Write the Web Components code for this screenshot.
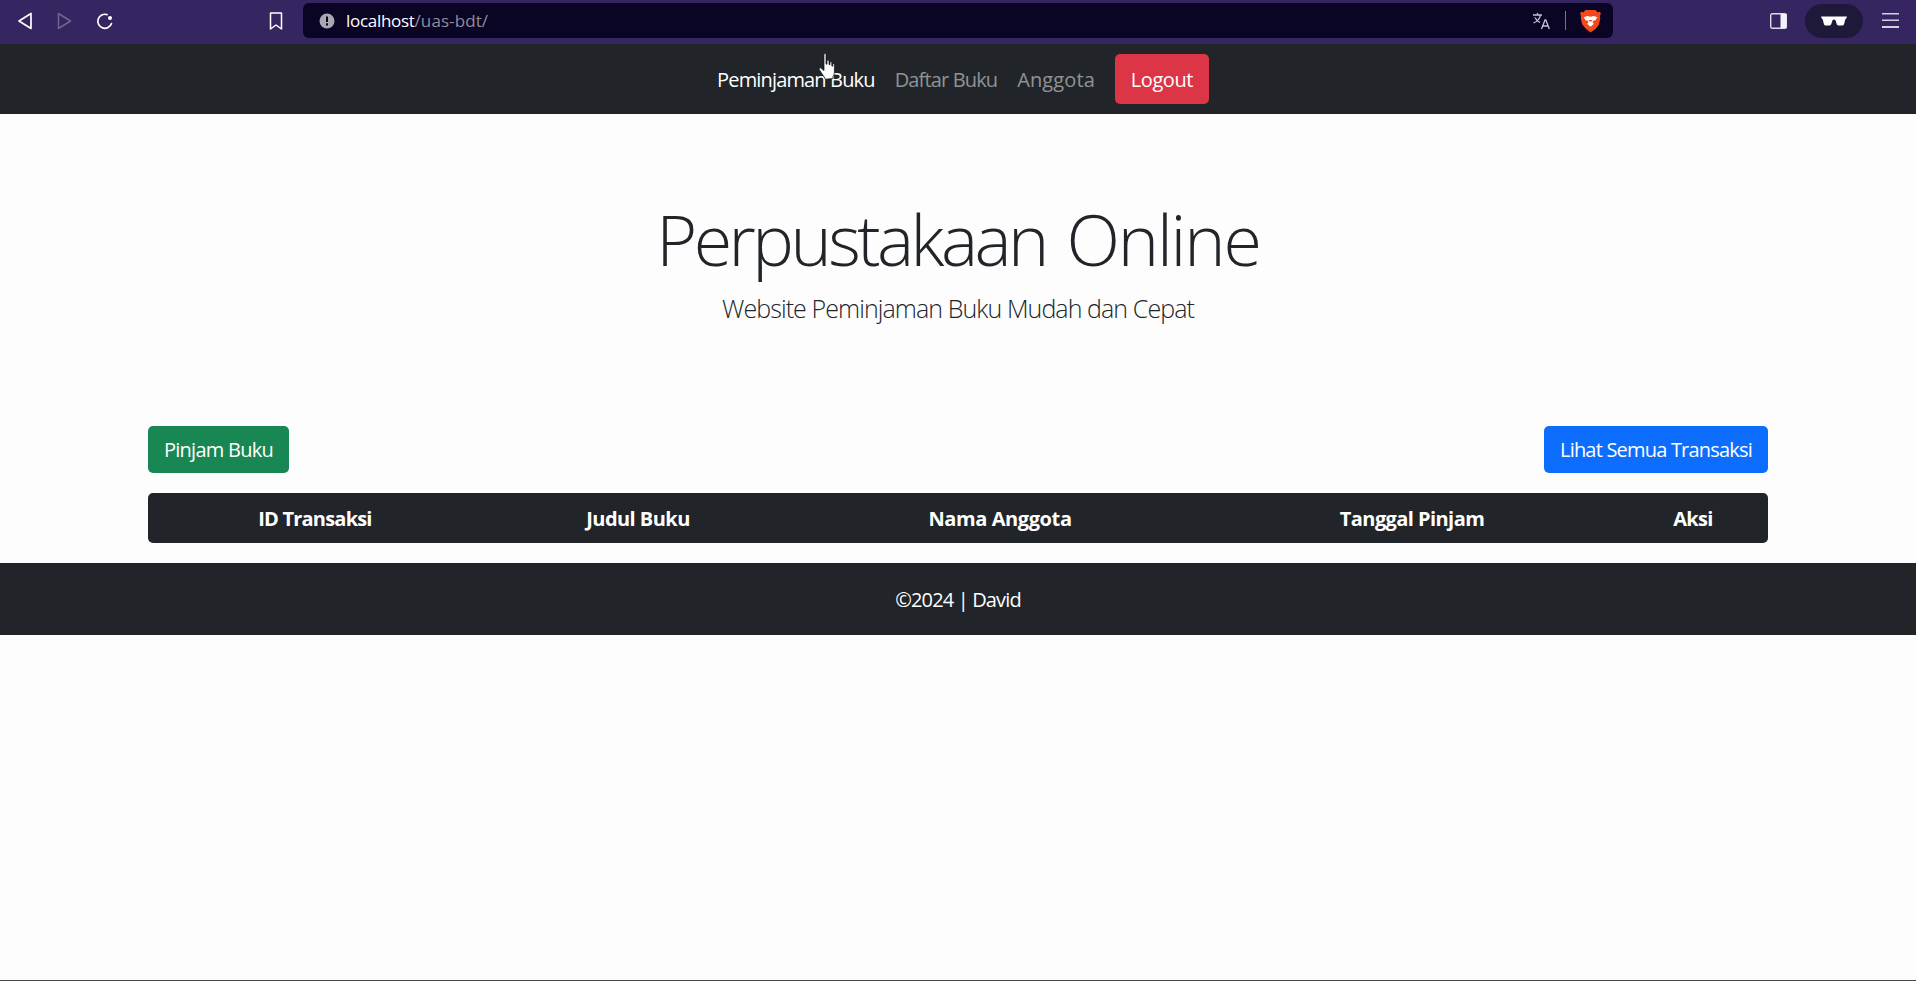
<!DOCTYPE html>
<html lang="id"><head><meta charset="utf-8"><title>Perpustakaan Online</title>
<style>
html,body{margin:0;padding:0;background:#fdfdfd}
body{font-family:"Open Sans","Noto Sans","Liberation Sans",sans-serif}
</style></head><body>
<app-page>
  <browser-bar></browser-bar>
  <site-nav>
    <nav-link active>Peminjaman Buku</nav-link>
    <nav-link>Daftar Buku</nav-link>
    <nav-link style="letter-spacing:.1px">Anggota</nav-link>
    <action-btn slot="end" kind="danger" tall style="letter-spacing:-.45px">Logout</action-btn>
  </site-nav>
  <hero-banner>
    <span slot="title"><span style="letter-spacing:-3.55px">Perpustakaan</span> <span style="letter-spacing:-2.15px">Online</span></span>
    <span slot="lead">Website Peminjaman Buku Mudah dan Cepat</span>
  </hero-banner>
  <main-panel>
    <action-btn slot="left" kind="success" style="letter-spacing:-.75px">Pinjam Buku</action-btn>
    <action-btn slot="right" kind="primary" style="letter-spacing:-.8px">Lihat Semua Transaksi</action-btn>
    <table-head>
      <span style="letter-spacing:-.8px">ID Transaksi</span><span style="letter-spacing:-.55px">Judul Buku</span><span style="letter-spacing:-.4px">Nama Anggota</span><span style="letter-spacing:-.57px">Tanggal Pinjam</span><span>Aksi</span>
    </table-head>
  </main-panel>
  <site-footer>©2024 | David</site-footer>
  <hand-cursor></hand-cursor>
</app-page>
<script>
const FONT='"Open Sans","Noto Sans","Liberation Sans",sans-serif';
function def(name,html){
  customElements.define(name,class extends HTMLElement{
    constructor(){super();this.attachShadow({mode:'open'}).innerHTML=html;}
  });
}
def('app-page',`<style>
:host{display:flex;flex-direction:column;height:981px;box-sizing:border-box;position:relative;overflow:hidden;background:#fdfdfd;border-bottom:1px solid #46464e;font-family:${FONT};color:#212529}
</style><slot></slot>`);

def('browser-bar',`<style>
:host{display:flex;align-items:center;height:44px;box-sizing:border-box;padding-bottom:3px;background:#352560;color:#fff;flex:none}
svg{display:block;flex:none}
.url{margin-left:21px;width:1310px;height:35px;background:#0a0425;border-radius:6px;display:flex;align-items:center;box-sizing:border-box;padding:0 12px 0 16px}
.addr{margin-left:11px;font:17px/35px "Open Sans",sans-serif;letter-spacing:-.3px;color:#fff;flex:1;white-space:nowrap}
.addr i{font-style:normal;color:#8f8e9c;letter-spacing:.1px}
.sep{width:1px;height:19px;background:#77758a;margin:0 14px 0 14px}
</style>
<svg style="margin-left:17px" width="17" height="18" viewBox="0 0 17 18" fill="none" stroke="#fff" stroke-width="1.7" stroke-linejoin="round"><path d="M14 1.5v15L2 9z"/></svg>
<svg style="margin-left:23px" width="15" height="18" viewBox="0 0 15 18" fill="none" stroke="#6f6690" stroke-width="1.5" stroke-linejoin="round"><path d="M1.5 1.5v15L13.5 9z"/></svg>
<svg style="margin-left:24px" width="18" height="18" viewBox="0 0 18 18" fill="none" stroke="#fff" stroke-width="1.7" stroke-linecap="round"><path d="M15.5 11.5A7 7 0 1 1 11 2.6"/><circle cx="14" cy="6" r="2" fill="#fff" stroke="none"/></svg>
<svg style="margin-left:155px" width="14" height="18" viewBox="0 0 14 18" fill="none" stroke="#fff" stroke-width="1.5" stroke-linejoin="round"><path d="M1.5 1h11v16L7 13l-5.500 4z"/></svg>
<div class="url" style="margin-left:20px">
  <svg width="16" height="16" viewBox="0 0 16 16"><circle cx="8" cy="8" r="7.500" fill="#a9a8b2"/><rect x="7" y="3.500" width="2" height="5.500" fill="#0a0425"/><rect x="7" y="10.300" width="2" height="2.200" fill="#0a0425"/></svg>
  <div class="addr">localhost<i>/uas-bdt/</i></div>
  <svg width="19" height="19" viewBox="0 0 19 19" fill="none" stroke="#c4c3cc" stroke-width="1.300"><path d="M1 4h9M5.500 2v2M8.500 4c-.6 3.500-3 6.300-7 8M3 6.500c1 2.300 3 4 5 5"/><path d="M9.500 18l3.500-9h.8l3.500 9M10.700 15h5.400"/></svg>
  <div class="sep"></div>
  <svg width="21" height="24" viewBox="0 0 21 24"><path d="M5.500 1h10l2 2.200 2.500-.4.800 2-.9 2.500.4 2.200-1.300 6-3.500 4.500L10.500 23.500 5.500 19.500 2 15 .7 9l.4-1.700L.2 4.800l.8-2 2.500.4z" fill="#f1491d"/><path d="M3.800 8.300l3.500-1.400 3.200.8 3.200-.8 3.500 1.400-1.700 3-2.300.5-.6 1.800 1.300 1.100-3.400 3-3.400-3 1.300-1.100-.6-1.800-2.300-.5z" fill="#fff"/><path d="M8.300 11l1.400 1.500h1.600L12.700 11z" fill="#f1491d"/></svg>
</div>
<svg style="margin-left:157px" width="17" height="16" viewBox="0 0 17 16"><rect x=".7" y=".7" width="15.600" height="14.600" rx="1.500" fill="none" stroke="#dcdbe6" stroke-width="1.400"/><rect x="10.500" y="1" width="6" height="14" fill="#f2f1f6"/></svg>
<div style="margin-left:18px;width:58px;height:34px;border-radius:17px;background:#1e1839;display:flex;align-items:center;justify-content:center">
  <svg width="26" height="10" viewBox="0 0 26 10"><path d="M0 .5h26l-.8 2.300H24.500L23 8.300q-.4 1.200-1.700 1.200h-3.500q-1.400 0-2-1.300L14.400 4q-1.400-1-2.800 0l-1.400 4.200q-.6 1.300-2 1.300H4.700q-1.300 0-1.700-1.200L1.500 2.800H.8z" fill="#fff"/></svg>
</div>
<svg style="margin-left:19px" width="17" height="15" viewBox="0 0 17 15" fill="#d4d2e0"><rect y="0" width="17" height="1.500"/><rect y="6.500" width="17" height="1.500"/><rect y="13" width="17" height="2"/></svg>
`);

def('site-nav',`<style>
:host{display:flex;align-items:center;justify-content:center;height:70px;background:#212529;flex:none}
.l{display:flex;margin-top:2px}
::slotted([slot=end]){margin-left:10px}
</style><div class="l"><slot></slot></div><slot name="end"></slot>`);

def('nav-link',`<style>
:host{display:block;padding:0 10px;font-size:20px;line-height:30px;letter-spacing:-.85px;color:rgba(255,255,255,.5);white-space:nowrap}
:host([active]){color:#fff}
</style><slot></slot>`);

def('action-btn',`<style>
:host{display:inline-flex;align-items:center;height:47px;padding:0 16px;border-radius:5px;font-size:20px;letter-spacing:-.85px;color:#fff;white-space:nowrap;box-sizing:border-box}
:host([tall]){height:50px}
:host([kind=danger]){background:#dc3545}
:host([kind=success]){background:#198754}
:host([kind=primary]){background:#0d6efd}
</style><slot></slot>`);

def('hero-banner',`<style>
:host{display:flex;flex-direction:column;align-items:center;height:312px;box-sizing:border-box;padding-top:83px;flex:none;color:#212529}
.t{font-size:70px;font-weight:300;line-height:84px;word-spacing:2.4px;white-space:nowrap}
.s{margin-top:9px;font-size:25px;font-weight:300;line-height:37px;letter-spacing:-.92px;white-space:nowrap}
</style><div class="t"><slot name="title"></slot></div><div class="s"><slot name="lead"></slot></div>`);

def('main-panel',`<style>
:host{display:flex;flex-direction:column;gap:20px;padding:0 148px;flex:none}
.r{display:flex;justify-content:space-between}
</style><div class="r"><slot name="left"></slot><slot name="right"></slot></div><slot></slot>`);

def('table-head',`<style>
:host{display:grid;grid-template-columns:334px 312px 412px 412px 150px;align-items:center;height:50px;background:#212529;border-radius:5px;color:#fff;font-size:20px;font-weight:700;letter-spacing:-.7px;text-align:center;white-space:nowrap}
</style><slot></slot>`);

def('site-footer',`<style>
:host{display:flex;align-items:center;justify-content:center;height:72px;margin-top:20px;padding-top:1px;box-sizing:border-box;background:#212529;color:#fff;font-size:20px;letter-spacing:-.85px;flex:none}
</style><slot></slot>`);

def('hand-cursor',`<style>
:host{position:absolute;left:818px;top:53px;width:19px;height:27px;display:block}
svg{display:block}
</style><svg width="19" height="27" viewBox="0 0 19 27"><path d="M6 1.500q0-1 1-1t1 1V11l1 .2V8q0-.9 1-.9t1 .9v3.500l1 .2V9.500q0-.8.9-.8t.9.8V13l1 .2v-2q0-.7.800-.7t.8.700V19q0 3-1.500 4.500L15 25.500l-7.500.7L5.500 23l-4-6q-.8-1.500.2-2t2 .8L6 17.500z" fill="#fff" stroke="#111" stroke-width=".7"/></svg>`);
</script>
</body></html>
